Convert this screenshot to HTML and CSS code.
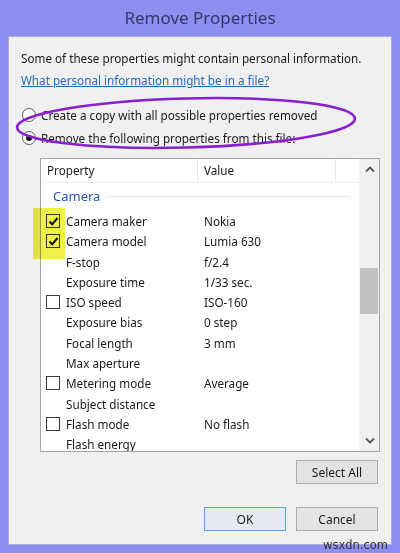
FILE: index.html
```html
<!DOCTYPE html>
<html>
<head>
<meta charset="utf-8">
<link rel="stylesheet" href="styles.css">
</head>
<body>
<div class="window">
  <div class="titlebar">Remove Properties</div>
  <div class="panel">
    <div class="intro">Some of these properties might contain personal information.</div>
    <div class="linkline"><a class="link" href="#">What personal information might be in a file?</a></div>
    <div class="options">
      <div class="radio-row"><span class="radio"></span><span>Create a copy with all possible properties removed</span></div>
      <div class="radio-row"><span class="radio checked"></span><span>Remove the following properties from this file:</span></div>
      <svg class="ellipse" width="350" height="64" viewBox="0 0 350 64">
        <ellipse cx="173" cy="32" rx="169" ry="24.5" transform="rotate(-1.5 173 32)" fill="none" stroke="#8a1fcf" stroke-width="2.6"/>
      </svg>
    </div>
    <div class="listbox">
      <div class="list-main">
        <div class="header">
          <div class="hcol hprop">Property</div>
          <div class="hcol hval">Value</div>
          <div class="hcol hrest"></div>
        </div>
        <div class="group"><span class="group-name">Camera</span><span class="group-line"></span></div>
        <div class="row"><span class="cb checked"><svg width="11" height="11" viewBox="0 0 11 11"><path d="M1.5 5.5 L4.2 8.3 L9.5 2" fill="none" stroke="#111" stroke-width="2"/></svg></span><span class="pname">Camera maker</span><span class="pval">Nokia</span></div>
        <div class="row"><span class="cb checked"><svg width="11" height="11" viewBox="0 0 11 11"><path d="M1.5 5.5 L4.2 8.3 L9.5 2" fill="none" stroke="#111" stroke-width="2"/></svg></span><span class="pname">Camera model</span><span class="pval">Lumia 630</span></div>
        <div class="row"><span class="cb none"></span><span class="pname">F-stop</span><span class="pval">f/2.4</span></div>
        <div class="row"><span class="cb none"></span><span class="pname">Exposure time</span><span class="pval">1/33 sec.</span></div>
        <div class="row"><span class="cb"></span><span class="pname">ISO speed</span><span class="pval">ISO-160</span></div>
        <div class="row"><span class="cb none"></span><span class="pname">Exposure bias</span><span class="pval">0 step</span></div>
        <div class="row"><span class="cb none"></span><span class="pname">Focal length</span><span class="pval">3 mm</span></div>
        <div class="row"><span class="cb none"></span><span class="pname">Max aperture</span><span class="pval"></span></div>
        <div class="row"><span class="cb"></span><span class="pname">Metering mode</span><span class="pval">Average</span></div>
        <div class="row"><span class="cb none"></span><span class="pname">Subject distance</span><span class="pval"></span></div>
        <div class="row"><span class="cb"></span><span class="pname">Flash mode</span><span class="pval">No flash</span></div>
        <div class="row"><span class="cb none"></span><span class="pname">Flash energy</span><span class="pval"></span></div>
      </div>
      <div class="scrollbar">
        <div class="arrow"><svg width="10" height="7" viewBox="0 0 10 7"><path d="M1 5.5 L5 1.5 L9 5.5" fill="none" stroke="#555" stroke-width="1.8"/></svg></div>
        <div class="track"><div class="thumb"></div></div>
        <div class="arrow"><svg width="10" height="7" viewBox="0 0 10 7"><path d="M1 1.5 L5 5.5 L9 1.5" fill="none" stroke="#555" stroke-width="1.8"/></svg></div>
      </div>
      <div class="highlight"></div>
    </div>
    <div class="select-row"><button class="btn">Select All</button></div>
    <div class="footer"><button class="btn default">OK</button><button class="btn">Cancel</button></div>
  </div>
  <div class="watermark">wsxdn.com</div>
</div>
</body>
</html>
```

FILE: styles.css
```css
* { box-sizing: border-box; }
html, body { margin: 0; padding: 0; }
body {
  width: 400px;
  height: 553px;
  overflow: hidden;
  font-family: "Noto Sans", "Open Sans", sans-serif;
  font-size: 11.7px;
  color: #1a1a1a;
}
.window {
  position: relative;
  width: 400px;
  height: 553px;
  background: #8d8ff0;
  display: flex;
  flex-direction: column;
  padding: 0 8px 8px 8px;
}
.titlebar {
  height: 36px;
  line-height: 36px;
  text-align: center;
  font-size: 17px;
  color: #34356a;
}
.panel {
  flex: 1;
  background: #f0f0f0;
  border: 1px solid #a9abd9;
  padding: 13px 0 0 12px;
  display: flex;
  flex-direction: column;
}
.intro { line-height: 16px; height: 16px; }
.linkline { margin-top: 6px; line-height: 16px; height: 16px; }
.link { color: #1c6cc0; text-decoration: underline; }
.options { position: relative; margin-top: 19px; display: flex; flex-direction: column; gap: 7px; }
.radio-row { display: flex; align-items: center; height: 16px; gap: 5px; margin-left: 1px; }
.radio {
  width: 14px; height: 14px; border-radius: 50%;
  border: 1px solid #5c5c5c; background: #fff;
  position: relative; flex: none;
}
.radio.checked::after {
  content: ""; position: absolute; left: 3px; top: 3px; width: 6px; height: 6px;
  border-radius: 50%; background: #1a1a1a;
}
.ellipse { position: absolute; left: -8px; top: -16px; pointer-events: none; }
.listbox {
  position: relative;
  margin-top: 12px;
  margin-left: 19px;
  width: 340px;
  height: 294px;
  border: 1px solid #a4a4a4;
  background: #fff;
  display: flex;
}
.list-main { flex: 1; overflow: hidden; }
.header { display: flex; height: 24px; border-bottom: 1px solid #eef0f3; }
.hcol { line-height: 23px; padding-left: 6px; border-right: 1px solid #e6e8ec; }
.hprop { width: 157px; }
.hval { width: 138px; }
.hrest { flex: 1; border-right: none; }
.group { height: 28px; display: flex; align-items: center; padding-left: 12px; padding-bottom: 3px; }
.group-name { color: #2651b4; font-size: 13px; }
.group-line { flex: 1; height: 1px; background: #e1e6ee; margin: 2px 9px 0 6px; }
.row { display: flex; align-items: center; height: 20.27px; }
.cb {
  width: 14px; height: 14px; border: 1px solid #3a3a3a; background: #fff;
  margin-left: 5px; margin-right: 6px; flex: none;
  display: flex; align-items: center; justify-content: center;
}
.cb.none { border-color: transparent; background: transparent; }
.pname { width: 138px; }
.scrollbar {
  width: 20px; background: #f0f0f0; display: flex; flex-direction: column;
  border-left: 1px solid #f4f4f4;
}
.arrow { height: 21px; display: flex; align-items: center; justify-content: center; }
.track { flex: 1; position: relative; }
.thumb { position: absolute; left: 0; right: 1px; top: 88px; height: 46px; background: #c2c2c2; }
.highlight {
  position: absolute; left: -8px; top: 49px; width: 32px; height: 51px;
  background: #f0f04a; mix-blend-mode: multiply; pointer-events: none;
}
.select-row { display: flex; justify-content: flex-end; margin-top: 8px; padding-right: 13px; }
.footer { display: flex; justify-content: flex-end; gap: 10px; margin-top: 23px; padding-right: 13px; }
.btn {
  width: 82px; height: 24px;
  font-family: "Noto Sans", "Open Sans", sans-serif; font-size: 12px; color: #1a1a1a;
  background: #e3e3e3; border: 1px solid #acacac; padding: 0;
}
.btn.default { border-color: #5fa2e6; background: #e5eaf0; }
.watermark {
  position: absolute; right: 12px; bottom: 1px;
  font-family: "DejaVu Sans", sans-serif; font-size: 11.5px; color: #333;
}
```
